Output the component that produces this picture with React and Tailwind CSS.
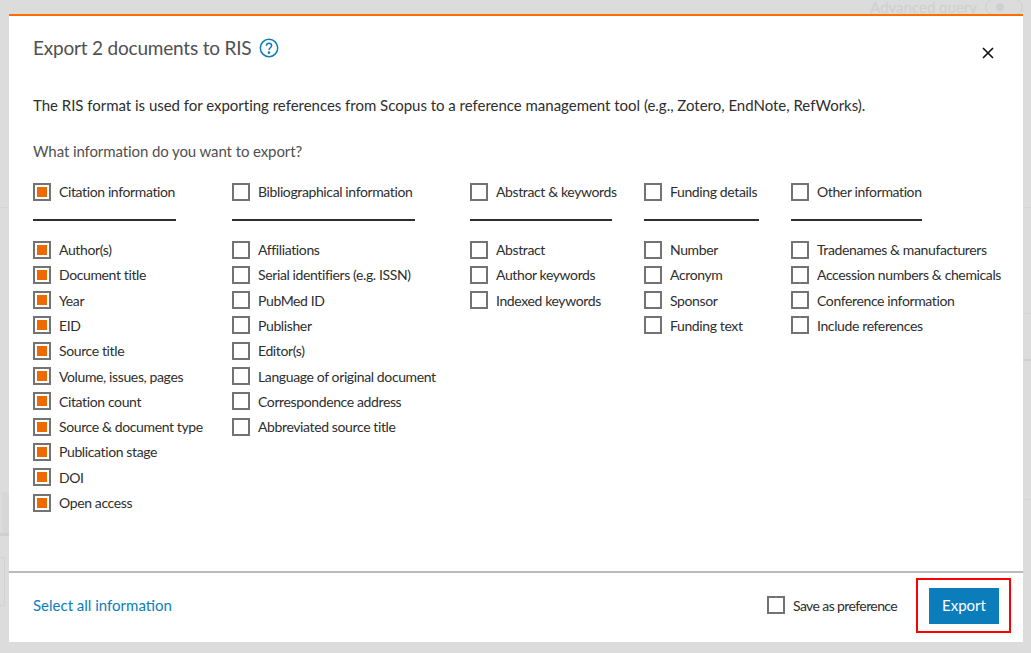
import React from 'react';

const columns = [
  {
    width: 'w-[167px]',
    rule: 'w-[143px]',
    title: 'Citation information',
    checked: true,
    items: ['Author(s)', 'Document title', 'Year', 'EID', 'Source title', 'Volume, issues, pages', 'Citation count', 'Source & document type', 'Publication stage', 'DOI', 'Open access'],
  },
  {
    width: 'w-[206px]',
    rule: 'w-[183px]',
    title: 'Bibliographical information',
    items: ['Affiliations', 'Serial identifiers (e.g. ISSN)', 'PubMed ID', 'Publisher', 'Editor(s)', 'Language of original document', 'Correspondence address', 'Abbreviated source title'],
  },
  {
    width: 'w-[142px]',
    rule: 'w-[142px]',
    title: 'Abstract & keywords',
    items: ['Abstract', 'Author keywords', 'Indexed keywords'],
  },
  {
    width: 'w-[115px]',
    rule: 'w-[115px]',
    title: 'Funding details',
    items: ['Number', 'Acronym', 'Sponsor', 'Funding text'],
  },
  {
    width: 'w-[209px]',
    rule: 'w-[131px]',
    title: 'Other information',
    items: ['Tradenames & manufacturers', 'Accession numbers & chemicals', 'Conference information', 'Include references'],
  },
];

function Check({ label, checked, tracking = 'tracking-[-0.38px]' }) {
  return (
    <div className="flex h-[25.3px] items-center gap-2 whitespace-nowrap">
      <span className="flex h-[18px] w-[18px] shrink-0 items-center justify-center border-2 border-[#737373] bg-white">
        {checked && <span className="h-[10px] w-[10px] bg-[#ec6a00]" />}
      </span>
      <span className={`text-[14px] text-[#2e2e2e] ${tracking}`}>{label}</span>
    </div>
  );
}

export default function App() {
  return (
    <div className="relative h-[653px] w-[1031px] overflow-hidden bg-[#dcdcdc] font-['Lato','Open_Sans',sans-serif]">
      {/* faded page behind the dialog */}
      <div className="absolute right-[8px] top-[-4px] flex items-center gap-2 text-[15px] text-[#cfcfcf]">
        Advanced query
        <span className="flex h-[16px] w-[38px] items-center rounded-full border border-[#d0d0d0] pl-[10px]">
          <span className="h-[8px] w-[8px] rounded-full bg-[#cfcfcf]" />
        </span>
      </div>
      <div className="absolute left-0 top-[207px] h-px w-full bg-[#d5d5d5]" />
      <div className="absolute left-[2px] top-[492px] h-[42px] w-[8px] bg-[#d7d7d7]" />
      <div className="absolute left-0 top-[533px] h-[3px] w-[10px] bg-[#d0d0d0]" />
      <div className="absolute left-[-4px] top-[557px] h-[49px] w-[9px] border border-[#d2d2d2]" />
      <div className="absolute right-0 top-[313px] h-px w-[10px] bg-[#d5d5d5]" />
      <div className="absolute right-0 top-[359px] h-[2px] w-[10px] bg-[#d0d0d0]" />
      <div className="absolute right-0 top-[499px] h-px w-[10px] bg-[#d5d5d5]" />

      <div className="absolute left-[9px] top-[14px] flex h-[628px] w-[1014px] flex-col border-t-2 border-[#ff6c00] bg-white">
        <div className="flex-1 px-6">
          <div className="flex items-start justify-between pt-[16px]">
            <div className="flex items-center gap-2">
              <h2 className="text-[19px] leading-[32px] tracking-[-0.2px] text-[#505050]">Export 2 documents to RIS</h2>
              <svg viewBox="0 0 20 20" className="h-5 w-5 text-[#0c7dbb]" fill="none" stroke="currentColor" strokeWidth="1.5">
                <circle cx="10" cy="10" r="8.7" />
                <path d="M7.4 7.8c0-1.5 1.1-2.5 2.6-2.5s2.6 1 2.6 2.3c0 2.2-2.6 2.2-2.6 4.4" />
                <circle cx="10" cy="14.6" r="0.6" fill="currentColor" />
              </svg>
            </div>
            <svg viewBox="0 0 12 12" className="mr-[5px] mt-[15px] h-3 w-3 text-[#111111]" fill="none" stroke="currentColor" strokeWidth="1.6">
              <path d="M1 1l10 10M11 1L1 11" />
            </svg>
          </div>

          <p className="mt-[29px] text-[15px] leading-[24px] tracking-[-0.02px] text-[#2e2e2e]">
            The RIS format is used for exporting references from Scopus to a reference management tool (e.g., Zotero, EndNote, RefWorks).
          </p>
          <p className="mt-[22px] text-[15px] leading-[24px] tracking-[-0.1px] text-[#505050]">What information do you want to export?</p>

          <div className="mt-[16px] flex gap-8">
            {columns.map((col) => (
              <div key={col.title} className={`${col.width} shrink-0`}>
                <Check label={col.title} checked={col.checked} />
                <div className={`${col.rule} mb-[15.6px] mt-[15px] h-[2px] bg-[#2e2e2e]`} />
                {col.items.map((item) => (
                  <Check key={item} label={item} checked={col.checked} />
                ))}
              </div>
            ))}
          </div>
        </div>

        <div className="flex h-[71px] items-center justify-between border-t-2 border-[#b9b9b9] pb-1 pl-6 pr-6">
          <a className="text-[15px] text-[#0c7dbb]">Select all information</a>
          <div className="flex items-center gap-[31px]">
            <div className="w-[131px]">
              <Check label="Save as preference" tracking="tracking-[-0.6px]" />
            </div>
            <div className="relative">
              <button className="h-[36px] w-[70px] bg-[#0c7dbb] text-[15px] text-white">Export</button>
              <span className="absolute -bottom-[9px] -left-[13px] -right-[12px] -top-[10px] border-2 border-[#ff0000]" />
            </div>
          </div>
        </div>
      </div>
    </div>
  );
}
